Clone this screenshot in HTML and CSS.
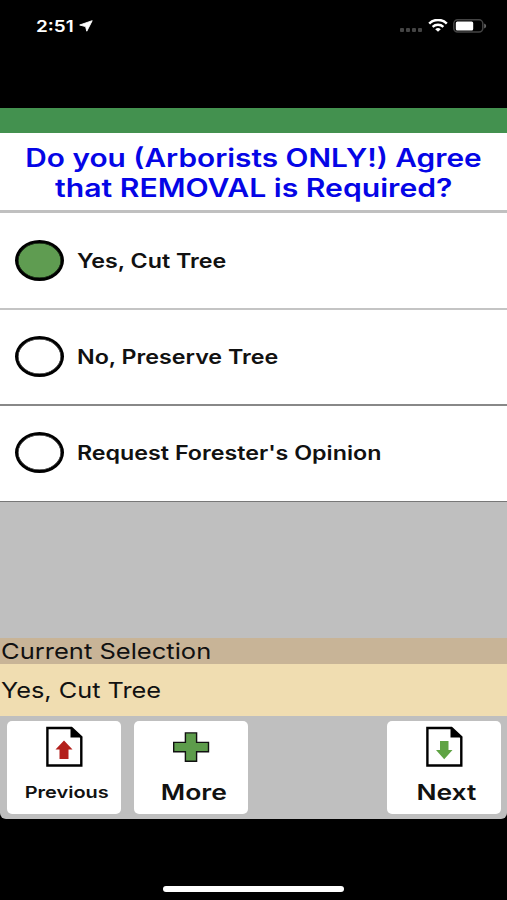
FILE: index.html
```html
<!DOCTYPE html>
<html lang="en">
<head>
  <meta charset="UTF-8">
  <title>Tree Removal</title>
  <link rel="stylesheet" href="styles.css">
</head>
<body>

<div class="status-bar">
  <span class="time"><span class="wide">2:51</span></span>
  <svg class="location" width="14" height="12" viewBox="0 0 14 12"><path d="M13.2 0.7 L7.8 11.2 L6.6 6.6 L0.7 5 Z" fill="#fff" stroke="#fff" stroke-width="0.9" stroke-linejoin="round"/></svg>
  <div class="signal"><i></i><i></i><i></i><i></i></div>
  <svg class="wifi" width="20" height="13" viewBox="0 0 20 13">
    <path d="M1.2 4.6 C6 -0.3 14 -0.3 18.8 4.6" fill="none" stroke="#fff" stroke-width="2.5"/>
    <path d="M4.6 7.9 C7.6 5 12.4 5 15.4 7.9" fill="none" stroke="#fff" stroke-width="2.3"/>
    <path d="M7.2 10.2 Q10 7.8 12.8 10.2 L10 12.8 Z" fill="#fff"/>
  </svg>
  <svg class="battery" width="34" height="14" viewBox="0 0 34 14">
    <rect x="0.8" y="0.8" width="29" height="12.2" rx="3.8" fill="none" stroke="#444" stroke-width="1.5"/>
    <rect x="2.8" y="2.4" width="17.4" height="9" rx="1.5" fill="#fff"/>
    <path d="M31.2 4.6 Q33.2 5.4 33.2 7 Q33.2 8.6 31.2 9.4 Z" fill="#666"/>
  </svg>
</div>

<div class="app">
  <div class="top-strip"></div>
  <h1 class="question"><span class="wide line-one">Do you (Arborists ONLY!) Agree</span><span class="wide line-two">that REMOVAL is Required?</span></h1>

  <div class="options">
    <div class="option selected"><span class="radio"></span><span class="wide">Yes, Cut Tree</span></div>
    <div class="option"><span class="radio"></span><span class="wide">No, Preserve Tree</span></div>
    <div class="option"><span class="radio"></span><span class="wide">Request Forester's Opinion</span></div>
  </div>

  <div class="spacer"></div>

  <div class="selection-title"><span class="wide">Current Selection</span></div>
  <div class="selection-value"><span class="wide">Yes, Cut Tree</span></div>

  <div class="nav-buttons">
    <button class="previous">
      <svg width="38" height="42" viewBox="0 0 38 42">
        <path d="M2.4 2 H26.5 L36.3 11 V39.5 H2.4 Z" fill="#fff" stroke="#000" stroke-width="2.4"/>
        <path d="M25.5 1 L37.4 11.5 H25.5 Z" fill="#000"/>
        <path d="M19 14.5 L27.5 23.5 H23.5 V33 H14.5 V23.5 H10.5 Z" fill="#b3201c"/>
      </svg>
      <span class="wide">Previous</span>
    </button>
    <button class="more">
      <svg width="38" height="42" viewBox="0 0 38 42">
        <path d="M13.4 6.9 H24.6 V16.4 H36.5 V25.8 H24.6 V35.2 H13.4 V25.8 H1.7 V16.4 H13.4 Z" fill="#5d9c4b" stroke="#111" stroke-width="1.4"/>
      </svg>
      <span class="wide">More</span>
    </button>
    <button class="next">
      <svg width="38" height="42" viewBox="0 0 38 42">
        <path d="M2.4 2 H26.5 L36.3 11 V39.5 H2.4 Z" fill="#fff" stroke="#000" stroke-width="2.4"/>
        <path d="M25.5 1 L37.4 11.5 H25.5 Z" fill="#000"/>
        <path d="M15 15 H23.5 V24 H27.5 L19.2 33.3 L11 24 H15 Z" fill="#5fa344"/>
      </svg>
      <span class="wide">Next</span>
    </button>
  </div>
</div>

<div class="home-indicator"></div>

</body>
</html>
```
FILE: styles.css
```css
* {
  box-sizing: border-box;
}
body {
  margin: 0;
  height: 900px;
  background: #000;
  font-family: Inter, "Liberation Sans", sans-serif;
  display: flex;
  flex-direction: column;
  overflow: hidden;
}
/* stretched lettering */
.wide {
  display: inline-block;
  white-space: nowrap;
  transform: scaleX(1.16);
  transform-origin: left center;
}
.status-bar {
  height: 108px;
  padding: 16px 21px 0 36px;
  display: flex;
  align-items: flex-start;
  color: #fff;
}
.time {
  width: 43px;
  font-size: 16px;
  font-weight: 600;
  line-height: 20px;
}
.time .wide {
  transform: scaleX(1.18);
}
.location {
  margin-top: 4px;
}
.signal {
  display: flex;
  gap: 2px;
  margin: 12px 6px 0 auto;
}
.signal i {
  width: 4px;
  height: 4px;
  border-radius: 1px;
  background: #444;
}
.wifi {
  margin: 3px 5px 0 0;
}
.battery {
  margin-top: 3px;
  margin-right: -1px;
}
.app {
  height: 711px;
  background: #bfbfbf;
  border-radius: 0 0 6px 6px;
  overflow: hidden;
  display: flex;
  flex-direction: column;
}
.top-strip {
  height: 25px;
  background: #43914f;
}
.question {
  margin: 0;
  height: 80px;
  padding-top: 10px;
  background: #fff;
  border-bottom: 3px solid #c0c0c0;
  color: #0505e6;
  font-size: 25px;
  font-weight: 600;
  line-height: 30px;
  display: flex;
  flex-direction: column;
  align-items: center;
}
.question .wide {
  transform-origin: center;
}
.question .line-one {
  transform: scaleX(1.192);
}
.question .line-two {
  transform: scaleX(1.206);
}
.option {
  height: 97px;
  padding-left: 15px;
  background: #fff;
  border-bottom: 2px solid #c4c4c4;
  display: flex;
  align-items: center;
  gap: 13px;
  color: #111;
  font-size: 19.5px;
  font-weight: 600;
}
.option .wide {
  transform: scaleX(1.192);
}
.option:nth-child(2) {
  height: 96px;
  padding-bottom: 1px;
  border-bottom-color: #888;
}
.option:last-child {
  height: 96px;
  padding-bottom: 2px;
  border-bottom: 1px solid #777;
}
.radio {
  width: 49px;
  height: 41px;
  border: 3px solid #000;
  border-radius: 50%;
  box-shadow: inset 0 0 0 0.5px #000;
}
.selected .radio {
  background: #5f9c51;
}
.spacer {
  flex: 1;
}
.selection-title {
  height: 26px;
  padding-left: 1px;
  background: #c8b497;
  color: #111;
  font-size: 22px;
  line-height: 26px;
}
.selection-value {
  height: 52px;
  padding-left: 1px;
  background: #f0ddb1;
  color: #111;
  font-size: 22px;
  line-height: 52px;
}
.selection-value .wide {
  transform: scaleX(1.15);
}
.nav-buttons {
  height: 103px;
  padding: 5px 6px 5px 7px;
  display: flex;
  gap: 13px;
}
.nav-buttons button {
  width: 114px;
  height: 93px;
  padding: 5px 0 0;
  border: none;
  border-radius: 5px;
  background: #fff;
  color: #111;
  font-family: inherit;
  font-size: 21.5px;
  font-weight: 600;
  line-height: 30px;
  display: flex;
  flex-direction: column;
  align-items: center;
  gap: 9px;
}
.nav-buttons .wide {
  transform: scaleX(1.23);
  transform-origin: center;
  margin-left: 6px;
}
.nav-buttons .previous {
  font-size: 16.5px;
}
.nav-buttons .previous .wide {
  transform: scaleX(1.21);
}
.nav-buttons .next {
  margin-left: auto;
}
.nav-buttons .next .wide {
  margin-left: 4px;
}
.home-indicator {
  width: 181px;
  height: 6px;
  margin: 67px auto 0 163px;
  border-radius: 3px;
  background: #fff;
}
```
